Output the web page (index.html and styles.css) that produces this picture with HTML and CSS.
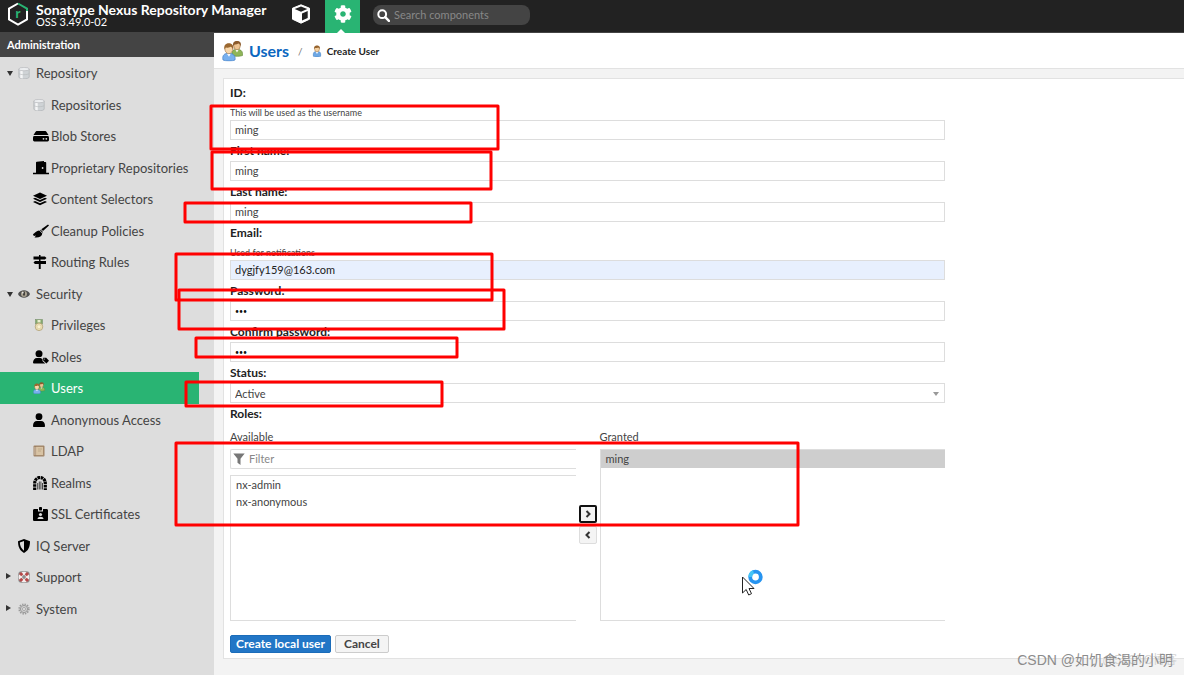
FILE: index.html
```html
<!DOCTYPE html>
<html lang="en">
<head>
<meta charset="utf-8">
<title>Create User - Nexus Repository Manager</title>
<link rel="stylesheet" href="styles.css">
</head>
<body>
<svg class="defs" aria-hidden="true">
  <symbol id="db" viewBox="0 0 12 12"><path d="M.8 2v8c0 2.400 10.400 2.400 10.400 0V2z" fill="#cfd3d6" stroke="#a9adb0" stroke-width=".6"/><path d="M2.300 3.300v7.700l2.400.5V3.500z" fill="#f5f6f7"/><ellipse cx="6" cy="2.100" rx="5.200" ry="1.700" fill="#eceef0" stroke="#b1b4b7" stroke-width=".6"/><path d="M.8 6.400c1 1.700 9.400 1.700 10.400 0" fill="none" stroke="#b5b8bb" stroke-width=".6"/></symbol>
  <symbol id="person" viewBox="0 0 12 16"><path d="M1 15c-1-4 1-6 3-6.500h4c2 .5 4 2.500 3 6.500-2 1.200-8 1.200-10 0z" fill="#6ea7e3" stroke="#4480c2" stroke-width=".6"/><path d="M4.200 9h3.600L6 12z" fill="#fff"/><ellipse cx="6" cy="5.200" rx="3.300" ry="3.900" fill="#f5d1a2" stroke="#8a5c2c" stroke-width=".5"/><path d="M2.300 6C1.500 2.500 3 .5 6 .5S10.500 2.500 9.700 6C9 4 8.500 3.600 7.500 3.300 6 4.300 4 4 3.400 3.900 2.800 4.500 2.600 5 2.300 6z" fill="#96632d"/></symbol>
  <symbol id="users" viewBox="0 0 21 21"><path d="M10 15c-.5-4 1-5.500 3-6h4c3 .7 4 3 3.500 6-2 1-8 1.200-10.500 0z" fill="#8fb559" stroke="#5d8530" stroke-width=".6"/><path d="M13.300 9h3.400L15 12z" fill="#fff"/><ellipse cx="15" cy="5.300" rx="3.300" ry="4" fill="#eec492" stroke="#8a5c2c" stroke-width=".5"/><path d="M11.200 6C10.500 2 12 .5 15 .5S19.500 2 18.800 6c-.6-2-1.300-2.700-2.300-2.900-1.500.8-3 .9-4 .8-.5.5-1 1.100-1.300 2.100z" fill="#8b5a2b"/><path d="M1 19.500c-1-4 1-6 3.200-6.500H9c3 .7 4.700 3 4 6.500-2.500 1.300-9.500 1.300-12 0z" fill="#78b0ee" stroke="#4682c9" stroke-width=".7"/><path d="M4.800 13h4L7 16.300z" fill="#fff"/><ellipse cx="6.800" cy="8.500" rx="3.900" ry="4.700" fill="#f8d7ab" stroke="#8a5c2c" stroke-width=".5"/><path d="M2.500 9.500C1.500 5 3.500 2.800 6.800 2.800s5.300 2.200 4.300 6.700c-.6-2.300-1.500-3-2.600-3.300-1.500 1-3.800 1.100-4.700.9-.6.600-1 1.200-1.300 2.400z" fill="#9a672f"/></symbol>
</svg>

<header class="topbar">
  <svg class="logo" viewBox="0 0 22 24" aria-hidden="true"><path d="M11 1.500L2 6.600v10.800l9 5.100 9-5.100V9" fill="none" stroke="#fff" stroke-width="2"/><path d="M11 1.500l9 5.100V9" fill="none" stroke="#29b473" stroke-width="2"/><text x="11" y="16" class="logo-letter">r</text></svg>
  <div class="brand"><strong>Sonatype Nexus Repository Manager</strong><span>OSS 3.49.0-02</span></div>
  <button class="mode" aria-label="Browse"><svg viewBox="0 0 20 20"><path d="M10 .8l8.500 3.400v11L10 19.200l-8.500-4v-11z" fill="#fff" stroke="#fff" stroke-linejoin="round"/><path d="M10 2.600L3.700 5 10 7.700 16.300 5z" fill="#222"/><path d="M11 9.600v7L16.700 14V7.100z" fill="#222"/></svg></button>
  <button class="mode active" aria-label="Administration"><svg viewBox="0 0 512 512"><path fill="#fff" d="M487.400 315.700l-42.600-24.600c4.300-23.200 4.300-47 0-70.200l42.600-24.600c4.900-2.800 7.100-8.600 5.500-14-11.100-35.600-30-67.800-54.700-94.600-3.800-4.100-10-5.100-14.800-2.300L380.800 110c-17.900-15.400-38.500-27.300-60.800-35.100V25.800c0-5.600-3.900-10.500-9.400-11.700-36.700-8.200-74.300-7.800-109.200 0-5.500 1.200-9.400 6.100-9.400 11.700V75c-22.200 7.900-42.800 19.800-60.800 35.100L88.700 85.500c-4.900-2.800-11-1.900-14.800 2.300-24.700 26.700-43.600 58.900-54.700 94.600-1.700 5.400.6 11.200 5.500 14L67.300 221c-4.300 23.200-4.300 47 0 70.200l-42.600 24.600c-4.900 2.800-7.100 8.600-5.500 14 11.100 35.600 30 67.800 54.700 94.600 3.800 4.100 10 5.100 14.800 2.300l42.600-24.600c17.900 15.400 38.500 27.300 60.800 35.100v49.200c0 5.600 3.900 10.500 9.400 11.700 36.700 8.200 74.300 7.800 109.200 0 5.500-1.200 9.400-6.100 9.400-11.700v-49.200c22.200-7.900 42.800-19.800 60.800-35.100l42.600 24.600c4.900 2.800 11 1.900 14.800-2.300 24.700-26.700 43.600-58.900 54.700-94.600 1.500-5.500-.7-11.300-5.600-14.100zM256 336c-44.100 0-80-35.900-80-80s35.900-80 80-80 80 35.900 80 80-35.900 80-80 80z"/></svg></button>
  <label class="search"><svg viewBox="0 0 13 13" aria-hidden="true"><circle cx="5.200" cy="5.200" r="3.900" fill="none" stroke="#fff" stroke-width="2"/><path d="M8.200 8.200l3.700 3.700" stroke="#fff" stroke-width="2.400" stroke-linecap="round"/></svg><input type="search" placeholder="Search components" aria-label="Search components"></label>
</header>

<div class="shell">
  <nav class="sidebar" aria-label="Administration">
    <h2>Administration</h2>
    <ul class="tree">
      <li><a class="top open" href="#"><svg viewBox="0 0 12 12"><use href="#db"/></svg>Repository</a></li>
      <li><a href="#"><svg class="small" viewBox="0 0 12 12"><use href="#db"/></svg>Repositories</a></li>
      <li><a href="#"><svg viewBox="0 0 16 14"><path d="M4 2h8c.8 0 1 .3 1.400.8L15.500 6H.5l2.100-3.200C3 2.300 3.200 2 4 2z"/><rect y="7" width="16" height="5.500" rx="1.400"/><circle cx="10.500" cy="9.800" r=".9" fill="#ddd"/><circle cx="13.300" cy="9.800" r=".9" fill="#ddd"/></svg>Blob Stores</a></li>
      <li><a href="#"><svg viewBox="0 0 16 14"><path d="M0 11.800h3V1.500C3 1 3.300.8 3.800.7L11 0v1h1.500c.4 0 .7.300.7.700v10.100H16V13.300H0z"/><circle cx="9.600" cy="7" r=".9" fill="#ddd"/></svg>Proprietary Repositories</a></li>
      <li><a href="#"><svg viewBox="0 0 16 14"><path d="M7 .5l7 3.200L7 6.900 0 3.700z"/><path d="M0 6.700l2-.9 5 2.300 5-2.300 2 .9-7 3.200z"/><path d="M0 10l2-.9 5 2.200 5-2.200 2 .9-7 3.300z"/></svg>Content Selectors</a></li>
      <li><a href="#"><svg viewBox="0 0 16 14"><path d="M15 .5l1 1-6 5.500-1.700-1.700zM7.800 5.800l2.100 2.100-.4.800-2.500-2.400zM6.300 6.600l3 3C9 12.500 6 14 1.500 13.500l1.500-2-2 .6c-.5-.6-.9-1.500-1-2.200C2 10 2.300 7 6.300 6.600z"/></svg>Cleanup Policies</a></li>
      <li><a href="#"><svg viewBox="0 0 16 14"><path d="M6 0h1.500v1.500h4.400L13.500 3l-1.600 1.500H.5v-3H6zM2 6h11v3H2L.5 7.500zM6 4h1.500v2.500H6zM5.800 9h1.900v5H5.800z"/></svg>Routing Rules</a></li>
      <li><a class="top open" href="#"><svg viewBox="0 0 12 12"><path d="M0 6c2-5 10-5 12 0-2 5-10 5-12 0z" fill="#4f4f4f"/><circle cx="6" cy="6" r="3" fill="#aaa291"/><path d="M6 3.500v4" stroke="#222" stroke-width="1.500"/><circle cx="4.900" cy="4.700" r=".8" fill="#fff"/></svg>Security</a></li>
      <li><a href="#"><svg class="small" viewBox="0 0 12 12"><rect x="2.500" y=".5" width="7" height="4.500" fill="#85a86d" stroke="#718964" stroke-width=".5"/><rect x="4.500" y="1" width="3" height="2.500" fill="#e9edcf"/><circle cx="6" cy="7.800" r="3.800" fill="#eee1b6" stroke="#a99769" stroke-width=".7"/><circle cx="6" cy="7.800" r="2" fill="#faf1d0" stroke="#cfc092" stroke-width=".5"/></svg>Privileges</a></li>
      <li><a href="#"><svg viewBox="0 0 16 14"><circle cx="6" cy="3.800" r="3.500"/><path d="M0 13c0-3 1.500-5 4-5h3.500l2 1V11l2.800 2.500H.8z"/><path d="M10.200 7.800h3l2.800 2.900-2.600 2.700-3.200-3z"/><circle cx="11.600" cy="9.100" r=".5" fill="#ddd"/></svg>Roles</a></li>
      <li class="selected"><a href="#" aria-current="page"><svg class="small" viewBox="0 0 21 21"><use href="#users"/></svg>Users</a></li>
      <li><a href="#"><svg class="small tall" viewBox="0 0 12 14"><circle cx="6" cy="3.700" r="3.400"/><path d="M0 13c0-3.500 1.500-5 4-5h4c2.500 0 4 1.500 4 5 0 .7-.4 1-1 1H1c-.6 0-1-.3-1-1z"/></svg>Anonymous Access</a></li>
      <li><a href="#"><svg class="small" viewBox="0 0 12 12"><rect x=".5" y=".5" width="11" height="11" rx="1" fill="#a18568"/><rect x="2.800" y="1.500" width="7.700" height="9" fill="#d8c3a4" stroke="#8e7154" stroke-width=".5"/><path d="M1 3h2M1 5h2M1 7h2M1 9h2" stroke="#efe3d2" stroke-width=".7"/><path d="M5 4h4M5 6h3" stroke="#b39b79" stroke-width=".6"/></svg>LDAP</a></li>
      <li><a href="#"><svg viewBox="0 0 16 14"><path d="M1.700 14V7.500C1.700-.5 12.300-.5 12.300 7.500V14" fill="none" stroke="#000" stroke-width="3.200" stroke-dasharray="2.600 .6"/><path d="M4.700 13.500V7M6.300 13.500V5.500M7.900 13.500V5.500M9.500 13.500V7" stroke="#333" stroke-width=".9"/></svg>Realms</a></li>
      <li><a href="#"><svg viewBox="0 0 16 14"><path d="M1.500 2H5v2.500h5V2h3.500c.9 0 1.500.6 1.500 1.300v9.400c0 .7-.6 1.300-1.500 1.300h-12C.6 14 0 13.400 0 12.700V3.300C0 2.600.6 2 1.500 2z"/><rect x="6" width="3" height="3.500" rx=".7"/><circle cx="7.500" cy="7.500" r="1.600" fill="#ddd"/><path d="M4.500 12c0-3 6-3 6 0z" fill="#ddd"/></svg>SSL Certificates</a></li>
      <li><a class="top" href="#"><svg class="tall" viewBox="0 0 12 14"><path d="M6 0l6 2.300C12 8 10 12 6 14 2 12 0 8 0 2.300z"/><path d="M6 2v9.700C3.400 10 2 7 1.800 3.600z" fill="#ddd"/></svg>IQ Server</a></li>
      <li><a class="top closed" href="#"><svg viewBox="0 0 12 12"><rect x=".3" y=".3" width="11.400" height="11.400" rx="3" fill="#8f8f8f"/><circle cx="6" cy="6" r="3.600" fill="none" stroke="#f5eeee" stroke-width="3.400"/><path d="M2 2l2.300 2.300M10 2L7.700 4.300M2 10l2.300-2.300M10 10L7.700 7.700" stroke="#b54848" stroke-width="3"/></svg>Support</a></li>
      <li><a class="top closed" href="#"><svg viewBox="0 0 12 12"><circle cx="6" cy="6" r="4.800" fill="none" stroke="#999" stroke-width="1.700" stroke-dasharray="1.400 1.110"/><circle cx="6" cy="6" r="3.600" fill="#d0d0d0" stroke="#999" stroke-width="1"/><circle cx="6" cy="6" r="1.500" fill="#eee" stroke="#999" stroke-width=".8"/></svg>System</a></li>
    </ul>
  </nav>

  <main class="content">
    <div class="crumbs">
      <svg class="crumb-users" viewBox="0 0 21 21" aria-hidden="true"><use href="#users"/></svg>
      <a href="#">Users</a><span class="slash">/</span>
      <svg class="crumb-user" viewBox="0 0 12 16" aria-hidden="true"><use href="#person"/></svg>
      <h1>Create User</h1>
    </div>
    <form class="panel">
      <div class="fields">
        <div class="field"><label for="uid">ID:</label><small>This will be used as the username</small><input id="uid" type="text" value="ming"></div>
        <div class="field"><label for="first">First name:</label><input id="first" type="text" value="ming"></div>
        <div class="field"><label for="last">Last name:</label><input id="last" type="text" value="ming"></div>
        <div class="field"><label for="email">Email:</label><small>Used for notifications</small><input id="email" class="autofilled" type="email" value="dygjfy159@163.com"></div>
        <div class="field"><label for="pass">Password:</label><input id="pass" type="password" value="abc"></div>
        <div class="field"><label for="pass2">Confirm password:</label><input id="pass2" type="password" value="abc"></div>
        <div class="field"><label for="status">Status:</label><div class="select"><select id="status"><option>Active</option><option>Disabled</option></select></div></div>
        <fieldset class="roles">
          <legend>Roles:</legend>
          <div class="picker">
            <section>
              <h3>Available</h3>
              <label class="filter"><svg viewBox="0 0 12 12" aria-hidden="true"><path d="M.3.500h11.400L7.500 5.800V12L4.500 9.800v-4z" fill="#777"/></svg><input type="text" placeholder="Filter" aria-label="Filter"></label>
              <ul class="list"><li>nx-admin</li><li>nx-anonymous</li></ul>
            </section>
            <div class="movers">
              <button type="button" class="focused" aria-label="Add"><svg viewBox="0 0 8 8"><path d="M2.500 1l3 3-3 3" /></svg></button>
              <button type="button" aria-label="Remove"><svg viewBox="0 0 8 8"><path d="M5.500 1l-3 3 3 3"/></svg></button>
            </div>
            <section>
              <h3>Granted</h3>
              <ul class="list granted"><li>ming</li></ul>
            </section>
          </div>
        </fieldset>
        <div class="actions"><button type="button" class="primary">Create local user</button><button type="button">Cancel</button></div>
      </div>
    </form>
  </main>
</div>

<svg class="marks" width="820" height="540" aria-hidden="true">
  <rect x="211" y="106" width="287" height="43"/>
  <rect x="212" y="152" width="279" height="37"/>
  <rect x="185" y="203" width="286" height="19"/>
  <rect x="176" y="254" width="316" height="46"/>
  <rect x="179" y="290" width="325" height="39"/>
  <rect x="196" y="338" width="261" height="19"/>
  <rect x="186" y="382" width="256" height="24"/>
  <rect x="176" y="443" width="622" height="82"/>
</svg>
<svg class="cursor" viewBox="0 0 24 28" aria-hidden="true"><circle cx="14.500" cy="8" r="5.300" fill="#fff" stroke="#2794f0" stroke-width="3.800"/><path d="M9.200 8A5.300 5.300 0 0 1 12.500 3" fill="none" stroke="#45c4f5" stroke-width="3.800"/><path d="M1.500 8v16l3.700-3.500 2.500 5.500 2.800-1.300L8 19.500h5z" fill="#fff" stroke="#222"/></svg>
<div class="watermark"><span class="faint">@51CTO博客</span><span>CSDN @如饥食渴的小明</span></div>
</body>
</html>
```

FILE: styles.css
```css
* { box-sizing: border-box; }
body { margin: 0; min-height: 100vh; display: flex; flex-direction: column; position: relative; background: #f3f3f3; color: #444; font: 11px/20px "Lato", "Open Sans", sans-serif; }
button, input, select { font: inherit; color: inherit; margin: 0; }
ul { list-style: none; margin: 0; padding: 0; }
a { color: inherit; text-decoration: none; }
h1, h2, h3 { margin: 0; }
.defs { position: absolute; width: 0; height: 0; }

.topbar { display: flex; height: 33px; padding-left: 7px; background: #222; border-bottom: 1px solid #444; color: #fff; }
.logo { width: 22px; height: 24px; margin-top: 2px; }
.logo-letter { fill: #29b473; font: bold 12px "Open Sans", sans-serif; text-anchor: middle; }
.brand { display: flex; flex-direction: column; width: 254px; padding: 3px 0 0 7px; white-space: nowrap; }
.brand strong { font-size: 14px; line-height: 13px; }
.brand span { font-size: 11px; line-height: 12px; }
.mode { width: 35px; height: 33px; margin-right: 7px; padding: 0 0 6px; display: grid; place-items: center; border: 0; background: none; position: relative; }
.mode svg { width: 20px; height: 20px; display: block; }
.mode.active { margin-right: 13px; background: #29b473; }
.mode.active svg { width: 18px; height: 18px; }
.mode.active::after { content: ""; position: absolute; bottom: 0; left: 12px; border: 4px solid transparent; border-bottom: 4px solid #fff; border-top: 0; }
.search { display: flex; align-items: center; gap: 4px; width: 157px; height: 20px; margin-top: 5px; padding-left: 4px; border-radius: 8px; background: #444; }
.search svg { width: 13px; height: 13px; }
.search input { flex: 1; min-width: 0; padding: 0; border: 0; outline: 0; background: none; appearance: none; }
.search input::placeholder { color: #888; }

.shell { display: flex; flex: 1; }
.sidebar { width: 214px; flex: none; background: #ddd; }
.sidebar h2 { padding-left: 7px; background: #444; color: #fff; font-size: 11px; line-height: 24px; }
.tree li { display: flex; height: 31px; }
.tree li:nth-child(odd) { height: 32px; }
.tree a { position: relative; display: flex; align-items: center; flex: 1; gap: 2px; margin-right: 15px; padding-left: 33px; font-size: 13px; color: #444; }
.tree svg { width: 16px; height: 14px; flex: none; }
.tree svg.small { width: 12px; height: 12px; margin-right: 4px; }
.tree svg.tall { height: 14px; }
.tree a.top { padding-left: 18px; gap: 6px; }
.tree a.top svg { width: 12px; }
.tree .open::before, .tree .closed::before { content: ""; position: absolute; border: 3px solid transparent; }
.tree .open::before { left: 7px; top: 14px; border-top: 5px solid #333; border-bottom: 0; }
.tree .closed::before { left: 6px; top: 12px; border-left: 5px solid #333; border-right: 0; }
.tree .selected a { background: #29b473; color: #fff; }

.content { flex: 1; min-width: 0; }
.crumbs { display: flex; align-items: center; height: 36px; padding-left: 8px; background: #fff; border-bottom: 1px solid #e2e2e2; }
.crumb-users { width: 21px; height: 22px; margin-right: 6px; }
.crumbs a { color: #0b67bf; font-size: 16px; font-weight: bold; }
.slash { margin: 0 9px; color: #777; font-size: 10px; }
.crumb-user { width: 10px; height: 12px; margin-right: 5px; }
.crumbs h1 { font-size: 10px; color: #222; }

.panel { margin: 9px 0 16px 9px; padding: 3px 6px 5px; border: 1px solid #e2e2e2; border-right: 0; background: #fff; }
.fields { max-width: 715px; }
.field { display: flex; flex-direction: column; }
.field > label, .roles legend { padding: 0; color: #222; font-size: 12px; font-weight: bold; line-height: 21px; }
.field small { padding-top: 2px; font-size: 9px; line-height: 15px; }
.field input, .select select { width: 100%; height: 20px; padding: 0 4px; border: 1px solid #ddd; border-radius: 0; outline: 0; background: #fff; }
.field input.autofilled { background: #e8f0fe; color: #222; }
.field input[type="password"] { color: #111; font-size: 7px; }
.select { display: flex; position: relative; }
.select select { appearance: none; }
.select::after { content: ""; position: absolute; right: 6px; top: 9px; border: 3px solid transparent; border-top: 4px solid #999; border-bottom: 0; pointer-events: none; }
.roles { margin: 0; padding: 0; border: 0; }
.picker { display: grid; grid-template-columns: 1fr 24px 1fr; }
.picker section { display: flex; flex-direction: column; }
.picker h3 { font-size: 11px; font-weight: normal; line-height: 25px; }
.filter { display: flex; align-items: center; gap: 4px; height: 20px; margin-bottom: 6px; padding-left: 2px; border: 1px solid #ddd; border-right: 0; border-radius: 2px 0 0 2px; }
.filter svg { width: 12px; height: 12px; }
.filter input { flex: 1; min-width: 0; padding: 0; border: 0; outline: 0; background: none; }
.filter input::placeholder { color: #888; }
.list { height: 146px; border: 1px solid #ddd; border-right: 0; }
.list li { padding-left: 5px; line-height: 17px; }
.list.granted { height: 172px; }
.list.granted li { line-height: 18px; background: #cecece; }
.movers { display: flex; flex-direction: column; align-items: center; justify-content: center; gap: 3px; padding-top: 3px; }
.movers button { width: 18px; height: 18px; padding: 0; display: grid; place-items: center; border: 1px solid #ddd; border-radius: 2px; background: #f4f4f4; }
.movers button.focused { border: 2px solid #111; }
.movers svg { width: 8px; height: 8px; fill: none; stroke: #333; stroke-width: 2; }
.actions { display: flex; gap: 4px; margin-top: 14px; }
.actions button { height: 18px; padding: 0 8px; border: 1px solid #ccc; border-radius: 2px; background: #f4f4f4; font-size: 12px; font-weight: bold; line-height: 16px; }
.actions .primary { padding: 0 5px; border-color: #1b6cb9; background: #2276c6; color: #fff; }

.marks { position: absolute; left: 0; top: 0; fill: none; stroke: #f00; stroke-width: 3; stroke-linejoin: round; pointer-events: none; }
.cursor { position: absolute; left: 741px; top: 569px; width: 24px; height: 28px; pointer-events: none; }
.watermark { position: absolute; right: 11px; bottom: 5px; color: #8c8c8c; font: 14px/20px "Liberation Sans", "Noto Sans CJK SC", sans-serif; white-space: nowrap; pointer-events: none; }
.watermark .faint { position: absolute; right: -4px; bottom: 0; color: #d4d4d4; font-size: 12px; }
.watermark span:last-child { position: relative; }
```
